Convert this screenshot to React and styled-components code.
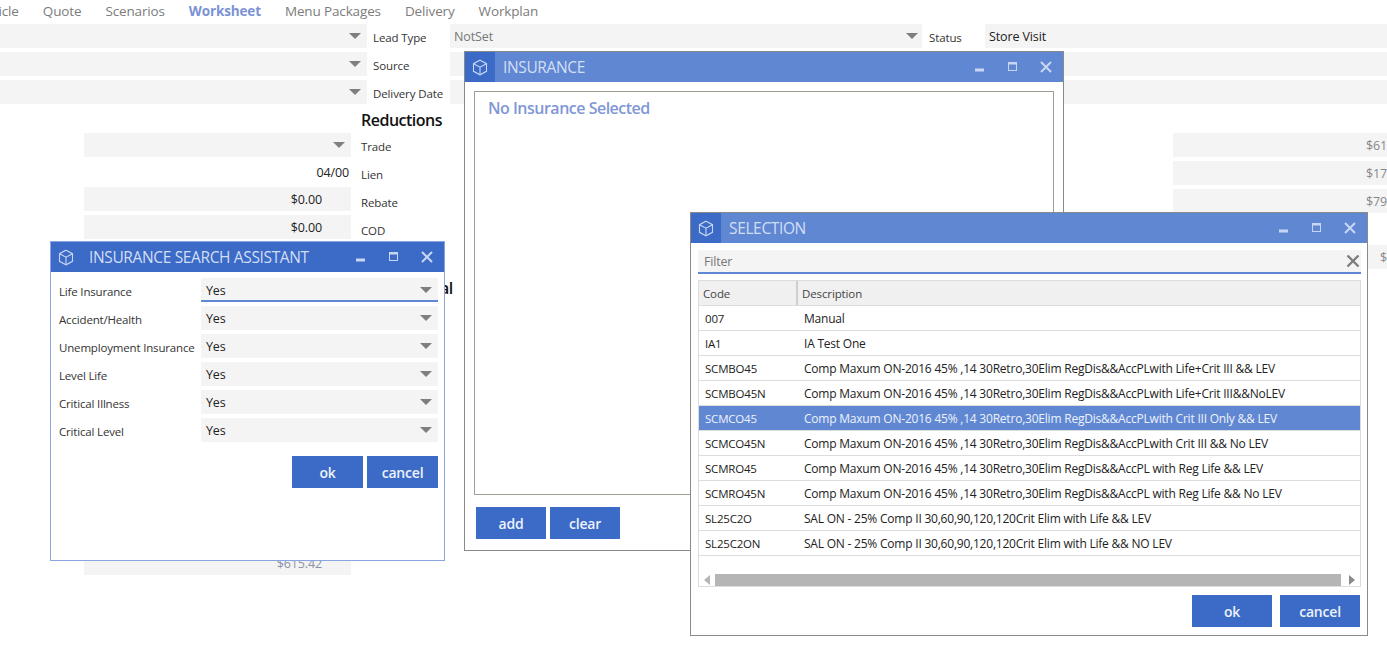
import React from "react";
import styled, { createGlobalStyle } from "styled-components";

const Global = createGlobalStyle`
  html, body { margin: 0; padding: 0; background: #fff; }
  body { font-family: "Open Sans", "Noto Sans", "Liberation Sans", sans-serif; font-size: 12px; color: #333; }
`;

const FIELD = "#f4f4f4";
const ACTIVE = "#3b6bc6";
const INACTIVE = "#6088d2";

const Page = styled.div`
  position: relative;
  width: 1387px;
  height: 657px;
  overflow: hidden;
  background: #fff;
`;

const TabBar = styled.nav`
  display: flex;
  gap: 24px;
  height: 24px;
  align-items: center;
  margin-left: -25px;
  padding-bottom: 3px;
  box-sizing: border-box;
`;
const Tab = styled.span`
  font-size: 13.5px;
  letter-spacing: -0.14px;
  line-height: 20px;
  color: ${(p) => (p.$active ? "#7a92d4" : "#7c7c7c")};
  font-weight: ${(p) => (p.$active ? 700 : 400)};
`;

const TopGrid = styled.section`
  display: grid;
  grid-template-columns: 367px 83px 472px 63px 1fr;
  grid-auto-rows: 24px;
  row-gap: 4px;
`;
const Field = styled.div`
  position: relative;
  display: flex;
  align-items: center;
  height: 24px;
  box-sizing: border-box;
  background: ${(p) => (p.$bare ? "transparent" : FIELD)};
  justify-content: ${(p) => (p.$right ? "flex-end" : "flex-start")};
  padding: ${(p) => p.$pad || "0 4px"};
  padding-top: ${(p) => (p.$focus ? "2px" : "")};
  font-size: 12.5px;
  letter-spacing: -0.12px;
  color: ${(p) => p.$color || "#222"};
  grid-column: ${(p) => p.$span || "auto"};
  border-bottom: ${(p) => (p.$focus ? `2px solid ${INACTIVE}` : "none")};
`;
const Arrow = styled.i`
  position: absolute;
  right: ${(p) => p.$right || 6}px;
  top: 9px;
  width: 0;
  height: 0;
  border-left: 6.5px solid transparent;
  border-right: 6.5px solid transparent;
  border-top: 6px solid #7f7f7f;
`;
const RowLabel = styled.div`
  display: flex;
  align-items: center;
  height: 24px;
  padding: 3px 0 0 ${(p) => p.$indent || 6}px;
  box-sizing: border-box;
  font-size: 11.5px;
  letter-spacing: -0.12px;
  color: #333;
`;

const Lower = styled.section`
  display: flex;
  margin-top: 29px;
  padding-left: 84px;
`;
const FieldColumn = styled.div`
  display: flex;
  flex: none;
  flex-direction: column;
  gap: 4px;
  width: ${(p) => p.$width}px;
  margin-left: ${(p) => p.$gap || 0}px;
`;
const LiteRow = styled(Field)`
  height: 22px;
  padding-right: 2px;
`;
const LabelColumn = styled.div`
  display: flex;
  flex: none;
  flex-direction: column;
  box-sizing: border-box;
  width: 110px;
  padding-left: 10px;
  margin-top: -26px;
`;
const Heading = styled.h3`
  margin: 0;
  height: 26px;
  font-size: 16px;
  line-height: 26px;
  letter-spacing: -0.5px;
  font-weight: 600;
  color: #111;
`;
const StackLabel = styled(RowLabel)`
  height: 28px;
  padding: 0 0 2px;
`;
const ClippedHeading = styled(Heading)`
  margin-top: 30px;
  padding-left: 79px;
`;
const Band = styled(Field)`
  margin-top: 309px;
  height: 23px;
  padding: 0 29px 0 0;
`;
const GapField = styled(Field)`
  margin-top: 28px;
`;

const Win = styled.section`
  position: absolute;
  left: ${(p) => p.$x}px;
  top: ${(p) => p.$y}px;
  width: ${(p) => p.$w}px;
  height: ${(p) => p.$h}px;
  box-sizing: border-box;
  background: #fff;
  border: 1px solid ${(p) => (p.$active ? "#8ba5e2" : "#8a8a8a")};
  display: flex;
  flex-direction: column;
`;
const TitleBar = styled.header`
  display: flex;
  align-items: center;
  height: 30px;
  flex: none;
  background: ${(p) => (p.$active ? ACTIVE : INACTIVE)};
`;
const IconZone = styled.div`
  width: 30px;
  height: 30px;
  display: flex;
  align-items: center;
  justify-content: center;
  background: ${ACTIVE};
`;
const TitleText = styled.h2`
  flex: 1;
  margin: 0 0 0 8px;
  font-size: 15.5px;
  font-weight: 400;
  letter-spacing: -0.36px;
  white-space: nowrap;
  color: #d3def5;
`;
const Controls = styled.div`
  display: flex;
  align-items: center;
  gap: 15px;
  padding-right: 8px;
`;

const BoxIcon = () => (
  <svg width="16" height="17" viewBox="0 0 16 17" fill="none" stroke="#c9d6f3" strokeWidth="1.1">
    <path d="M8 1.2 14.5 4.7v7.6L8 15.8 1.5 12.3V4.7z" />
    <path d="M1.5 4.7 8 8.2l6.5-3.5M8 8.2v7.6" />
  </svg>
);
const MinIcon = () => (
  <svg width="18" height="12" viewBox="0 0 18 12"><rect x="4" y="7.5" width="9" height="3" fill="#c9d6f3" /></svg>
);
const MaxIcon = () => (
  <svg width="18" height="12" viewBox="0 0 18 12" fill="none">
    <rect x="4.5" y="1.5" width="8" height="8" stroke="#c9d6f3" />
    <rect x="4" y="1" width="9" height="2.5" fill="#c9d6f3" />
  </svg>
);
const CloseIcon = () => (
  <svg width="18" height="12" viewBox="0 0 18 12" stroke="#c9d6f3" strokeWidth="2">
    <path d="M4 1 14 11M14 1 4 11" />
  </svg>
);

const WindowFrame = ({ title, active, x, y, w, h, children }) => (
  <Win $x={x} $y={y} $w={w} $h={h} $active={active}>
    <TitleBar $active={active}>
      <IconZone><BoxIcon /></IconZone>
      <TitleText>{title}</TitleText>
      <Controls><MinIcon /><MaxIcon /><CloseIcon /></Controls>
    </TitleBar>
    {children}
  </Win>
);

const Btn = styled.button`
  width: ${(p) => p.$w}px;
  height: 32px;
  padding: 0;
  border: none;
  background: ${ACTIVE};
  color: #eef2fb;
  font-family: inherit;
  font-size: 14px;
  font-weight: 600;
  letter-spacing: -0.2px;
`;
const ButtonRow = styled.div`
  display: flex;
  justify-content: ${(p) => p.$justify || "flex-end"};
  gap: ${(p) => p.$gap || 4}px;
  padding: ${(p) => p.$pad};
`;

const SearchBody = styled.div`
  display: grid;
  grid-template-columns: 142px 237px;
  grid-auto-rows: 24px;
  row-gap: 4px;
  padding: 6px 0 0 8px;
`;
const SearchLabel = styled.label`
  display: flex;
  align-items: center;
  padding-top: 3px;
  box-sizing: border-box;
  font-size: 11.5px;
  letter-spacing: -0.17px;
  color: #333;
  white-space: nowrap;
`;
const YesField = styled(Field)`
  padding-left: 5px;
`;

const InsBox = styled.div`
  margin: 9px 9px 12px;
  flex: none;
  height: 404px;
  box-sizing: border-box;
  border: 1px solid #a09d94;
  padding: 5px 13px;
  font-size: 16px;
  font-weight: 600;
  letter-spacing: -0.5px;
  line-height: 22px;
  color: #7f97d6;
`;

const FilterBar = styled.div`
  display: flex;
  align-items: center;
  justify-content: space-between;
  margin: 7px 6px 6px 7px;
  height: 24px;
  box-sizing: border-box;
  background: ${FIELD};
  border-bottom: 2px solid ${INACTIVE};
  padding: 0 0 0 6px;
  font-size: 12.5px;
  letter-spacing: -0.2px;
  color: #777;
`;
const ClearIcon = () => (
  <svg width="16" height="14" viewBox="0 0 16 14" stroke="#7d7d7d" strokeWidth="2.4">
    <path d="M2.5 1.5 13.5 12.5M13.5 1.5 2.5 12.5" />
  </svg>
);

const TableWrap = styled.div`
  margin: 0 6px 0 7px;
  height: 307px;
  box-sizing: border-box;
  border: 1px solid #dcdcdc;
  display: flex;
  flex-direction: column;
`;
const HeadRow = styled.div`
  display: grid;
  grid-template-columns: 99px 1fr;
  height: 24px;
  flex: none;
  background: #f0f0f0;
  border-bottom: 1px solid #dcdcdc;
  font-size: 11.5px;
  letter-spacing: -0.12px;
  color: #444;
`;
const HeadCell = styled.div`
  display: flex;
  align-items: center;
  padding-left: 4px;
  border-right: ${(p) => (p.$sep ? "2px solid #cfcfcf" : "none")};
`;
const BodyRow = styled.div`
  display: grid;
  grid-template-columns: 99px 1fr;
  height: 25px;
  flex: none;
  box-sizing: border-box;
  align-items: center;
  border-bottom: 1px solid #dcdcdc;
  background: ${(p) => (p.$selected ? INACTIVE : "#fff")};
  color: ${(p) => (p.$selected ? "#eef2fb" : "#222")};
  white-space: nowrap;
`;
const CodeCell = styled.span`
  padding-left: 6px;
  font-size: 11.5px;
  letter-spacing: -0.2px;
`;
const DescCell = styled.span`
  padding-left: 6px;
  font-size: 12px;
  letter-spacing: -0.215px;
`;
const Scroller = styled.div`
  display: flex;
  align-items: center;
  margin-top: auto;
  height: 12px;
  padding: 0 5px;
`;
const ScrollArrow = styled.i`
  width: 0;
  height: 0;
  border-top: 5px solid transparent;
  border-bottom: 5px solid transparent;
  ${(p) => (p.$left ? "border-right: 6px solid #b5b5b5;" : "border-left: 6px solid #8a8a8a;")}
`;
const Thumb = styled.div`
  flex: 1;
  height: 12px;
  margin: 0 8px 0 5px;
  background: #b5b5b5;
`;

const searchRows = ["Life Insurance", "Accident/Health", "Unemployment Insurance", "Level Life", "Critical Illness", "Critical Level"];
const tabs = ["Vehicle", "Quote", "Scenarios", "Worksheet", "Menu Packages", "Delivery", "Workplan"];
const P = "Comp Maxum ON-2016 45% ,14 30Retro,30Elim RegDis&&AccPL";
const tableRows = [
  ["007", "Manual"],
  ["IA1", "IA Test One"],
  ["SCMBO45", `${P}with Life+Crit III && LEV`],
  ["SCMBO45N", `${P}with Life+Crit III&&NoLEV`],
  ["SCMCO45", `${P}with Crit III Only && LEV`],
  ["SCMCO45N", `${P}with Crit III && No LEV`],
  ["SCMRO45", `${P} with Reg Life && LEV`],
  ["SCMRO45N", `${P} with Reg Life && No LEV`],
  ["SL25C2O", "SAL ON - 25% Comp II 30,60,90,120,120Crit Elim with Life && LEV"],
  ["SL25C2ON", "SAL ON - 25% Comp II 30,60,90,120,120Crit Elim with Life && NO LEV"],
];

export default function App() {
  return (
    <Page>
      <Global />
      <TabBar>
        {tabs.map((t) => <Tab key={t} $active={t === "Worksheet"}>{t}</Tab>)}
      </TabBar>
      <TopGrid>
        <Field><Arrow $right={6} /></Field>
        <RowLabel>Lead Type</RowLabel>
        <Field $color="#777"><span>NotSet</span><Arrow $right={4} /></Field>
        <RowLabel $indent={7}>Status</RowLabel>
        <Field>Store Visit</Field>
        <Field><Arrow $right={6} /></Field>
        <RowLabel>Source</RowLabel>
        <Field $span="3 / 6" />
        <Field><Arrow $right={6} /></Field>
        <RowLabel>Delivery Date</RowLabel>
        <Field $span="3 / 6" />
      </TopGrid>
      <Lower>
        <FieldColumn $width={267}>
          <Field><Arrow $right={6} /></Field>
          <LiteRow $bare $right>04/00</LiteRow>
          <Field $right $pad="0 29px 0 0">$0.00</Field>
          <Field $right $pad="0 29px 0 0">$0.00</Field>
          <Band $right $color="#8b93a6">$615.42</Band>
        </FieldColumn>
        <LabelColumn>
          <Heading>Reductions</Heading>
          <StackLabel>Trade</StackLabel>
          <StackLabel>Lien</StackLabel>
          <StackLabel>Rebate</StackLabel>
          <StackLabel>COD</StackLabel>
          <ClippedHeading>al</ClippedHeading>
        </LabelColumn>
        <FieldColumn $width={214} $gap={712}>
          <Field $right $pad="0" $color="#888">$61</Field>
          <Field $right $pad="0" $color="#888">$17</Field>
          <Field $right $pad="0" $color="#888">$79</Field>
          <GapField $right $pad="0" $color="#888">$</GapField>
        </FieldColumn>
      </Lower>

      <WindowFrame title="INSURANCE" x={464} y={51} w={600} h={500}>
        <InsBox>No Insurance Selected</InsBox>
        <ButtonRow $justify="flex-start" $pad="0 0 0 11px">
          <Btn $w={70}>add</Btn>
          <Btn $w={70}>clear</Btn>
        </ButtonRow>
      </WindowFrame>

      <WindowFrame title="SELECTION" x={690} y={212} w={678} h={424}>
        <FilterBar>Filter<ClearIcon /></FilterBar>
        <TableWrap>
          <HeadRow>
            <HeadCell $sep>Code</HeadCell>
            <HeadCell>Description</HeadCell>
          </HeadRow>
          {tableRows.map(([c, d]) => (
            <BodyRow key={c} $selected={c === "SCMCO45"}>
              <CodeCell>{c}</CodeCell>
              <DescCell>{d}</DescCell>
            </BodyRow>
          ))}
          <Scroller>
            <ScrollArrow $left />
            <Thumb />
            <ScrollArrow />
          </Scroller>
        </TableWrap>
        <ButtonRow $gap={8} $pad="8px 7px 0 0">
          <Btn $w={80}>ok</Btn>
          <Btn $w={80}>cancel</Btn>
        </ButtonRow>
      </WindowFrame>

      <WindowFrame title="INSURANCE SEARCH ASSISTANT" active x={50} y={241} w={395} h={320}>
        <SearchBody>
          {searchRows.map((l, i) => (
            <React.Fragment key={l}>
              <SearchLabel>{l}</SearchLabel>
              <YesField $focus={i === 0}>Yes<Arrow $right={6} /></YesField>
            </React.Fragment>
          ))}
        </SearchBody>
        <ButtonRow $pad="14px 6px 0 0">
          <Btn $w={71}>ok</Btn>
          <Btn $w={71}>cancel</Btn>
        </ButtonRow>
      </WindowFrame>
    </Page>
  );
}
